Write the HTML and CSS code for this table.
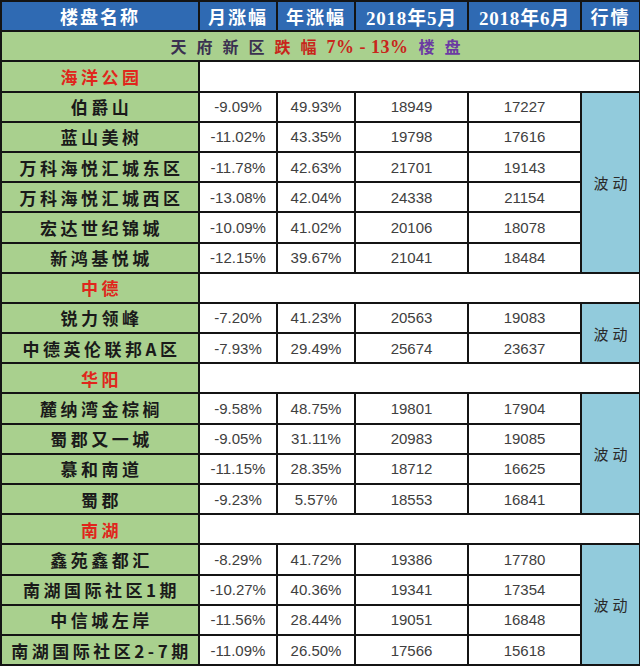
FILE: index.html
```html
<!DOCTYPE html>
<html lang="zh">
<head>
<meta charset="utf-8">
<title>天府新区楼盘</title>
<link rel="stylesheet" href="styles.css">
</head>
<body>
<table class="grid">
  <colgroup>
    <col class="c-name"><col class="c-pct"><col class="c-pct"><col class="c-price"><col class="c-price"><col class="c-trend">
  </colgroup>
  <tbody>
    <tr class="head">
      <th>楼盘名称</th><th>月涨幅</th><th>年涨幅</th><th class="num-h">2018年5月</th><th class="num-h">2018年6月</th><th>行情</th>
    </tr>
    <tr class="title">
      <td colspan="6"><span class="t-dark">天府新区</span><span class="t-red">跌幅</span><span class="t-red t-num">7% - 13%</span><span class="t-purple">楼盘</span></td>
    </tr>

    <tr class="section"><td class="name">海洋公园</td><td colspan="5" class="blank"></td></tr>
    <tr><td class="name">伯爵山</td><td>-9.09%</td><td>49.93%</td><td>18949</td><td>17227</td><td rowspan="6" class="trend">波动</td></tr>
    <tr><td class="name">蓝山美树</td><td>-11.02%</td><td>43.35%</td><td>19798</td><td>17616</td></tr>
    <tr><td class="name">万科海悦汇城东区</td><td>-11.78%</td><td>42.63%</td><td>21701</td><td>19143</td></tr>
    <tr><td class="name">万科海悦汇城西区</td><td>-13.08%</td><td>42.04%</td><td>24338</td><td>21154</td></tr>
    <tr><td class="name">宏达世纪锦城</td><td>-10.09%</td><td>41.02%</td><td>20106</td><td>18078</td></tr>
    <tr><td class="name">新鸿基悦城</td><td>-12.15%</td><td>39.67%</td><td>21041</td><td>18484</td></tr>

    <tr class="section"><td class="name">中德</td><td colspan="5" class="blank"></td></tr>
    <tr><td class="name">锐力领峰</td><td>-7.20%</td><td>41.23%</td><td>20563</td><td>19083</td><td rowspan="2" class="trend">波动</td></tr>
    <tr><td class="name">中德英伦联邦A区</td><td>-7.93%</td><td>29.49%</td><td>25674</td><td>23637</td></tr>

    <tr class="section"><td class="name">华阳</td><td colspan="5" class="blank"></td></tr>
    <tr><td class="name">麓纳湾金棕榈</td><td>-9.58%</td><td>48.75%</td><td>19801</td><td>17904</td><td rowspan="4" class="trend">波动</td></tr>
    <tr><td class="name">蜀郡又一城</td><td>-9.05%</td><td>31.11%</td><td>20983</td><td>19085</td></tr>
    <tr><td class="name">慕和南道</td><td>-11.15%</td><td>28.35%</td><td>18712</td><td>16625</td></tr>
    <tr><td class="name">蜀郡</td><td>-9.23%</td><td>5.57%</td><td>18553</td><td>16841</td></tr>

    <tr class="section"><td class="name">南湖</td><td colspan="5" class="blank"></td></tr>
    <tr><td class="name">鑫苑鑫都汇</td><td>-8.29%</td><td>41.72%</td><td>19386</td><td>17780</td><td rowspan="4" class="trend">波动</td></tr>
    <tr><td class="name">南湖国际社区1期</td><td>-10.27%</td><td>40.36%</td><td>19341</td><td>17354</td></tr>
    <tr><td class="name">中信城左岸</td><td>-11.56%</td><td>28.44%</td><td>19051</td><td>16848</td></tr>
    <tr><td class="name">南湖国际社区2-7期</td><td>-11.09%</td><td>26.50%</td><td>17566</td><td>15618</td></tr>
  </tbody>
</table>
</body>
</html>
```

FILE: styles.css
```css
html, body {
  margin: 0;
  padding: 0;
  background: #ffffff;
}

.grid {
  width: 639px;
  table-layout: fixed;
  border-collapse: collapse;
  border: 2px solid #141414;
  font-family: "Liberation Sans", Arial, "Noto Sans CJK SC", sans-serif;
  font-size: 15px;
  color: #404040;
}

.c-name { width: 198px; }
.c-pct { width: 78px; }
.c-price { width: 113px; }
.c-trend { width: 59px; }

.grid tr {
  height: 30.2px;
}

.grid td,
.grid th {
  border: 2px solid #141414;
  padding: 0;
  text-align: center;
  vertical-align: middle;
  white-space: nowrap;
  overflow: hidden;
}

.head th {
  background: #2f6ab3;
  color: #ffffff;
  font-family: "Noto Sans CJK SC", sans-serif;
  font-weight: 700;
  font-size: 18px;
  letter-spacing: 2px;
}

.head th.num-h {
  font-family: "Liberation Serif", "Noto Sans CJK SC", serif;
  font-size: 19px;
  letter-spacing: 0.8px;
}

.title td {
  background: #a9d08e;
  font-family: "Noto Sans CJK SC", sans-serif;
  font-weight: 700;
  font-size: 16px;
}

.title span {
  letter-spacing: 10px;
}

.t-dark { color: #3a3150; }
.t-red { color: #c8261b; }
.t-purple { color: #6b3aa3; letter-spacing: 12px; }

.title .t-num {
  font-family: "Liberation Serif", serif;
  font-size: 18px;
  letter-spacing: 0.5px;
  margin-right: 10px;
}

.name {
  background: #a9d08e;
  color: #1a1a1a;
  font-family: "Noto Sans CJK SC", sans-serif;
  font-weight: 700;
  font-size: 17px;
  letter-spacing: 3.5px;
  text-indent: 3px;
}

.section .name {
  color: #e0261c;
}

.blank {
  background: #ffffff;
}

.trend {
  background: #92cbdc;
  font-family: "Noto Sans CJK SC", sans-serif;
  font-size: 15px;
  color: #2a2a2a;
  letter-spacing: 4px;
  text-indent: 4px;
}
```
